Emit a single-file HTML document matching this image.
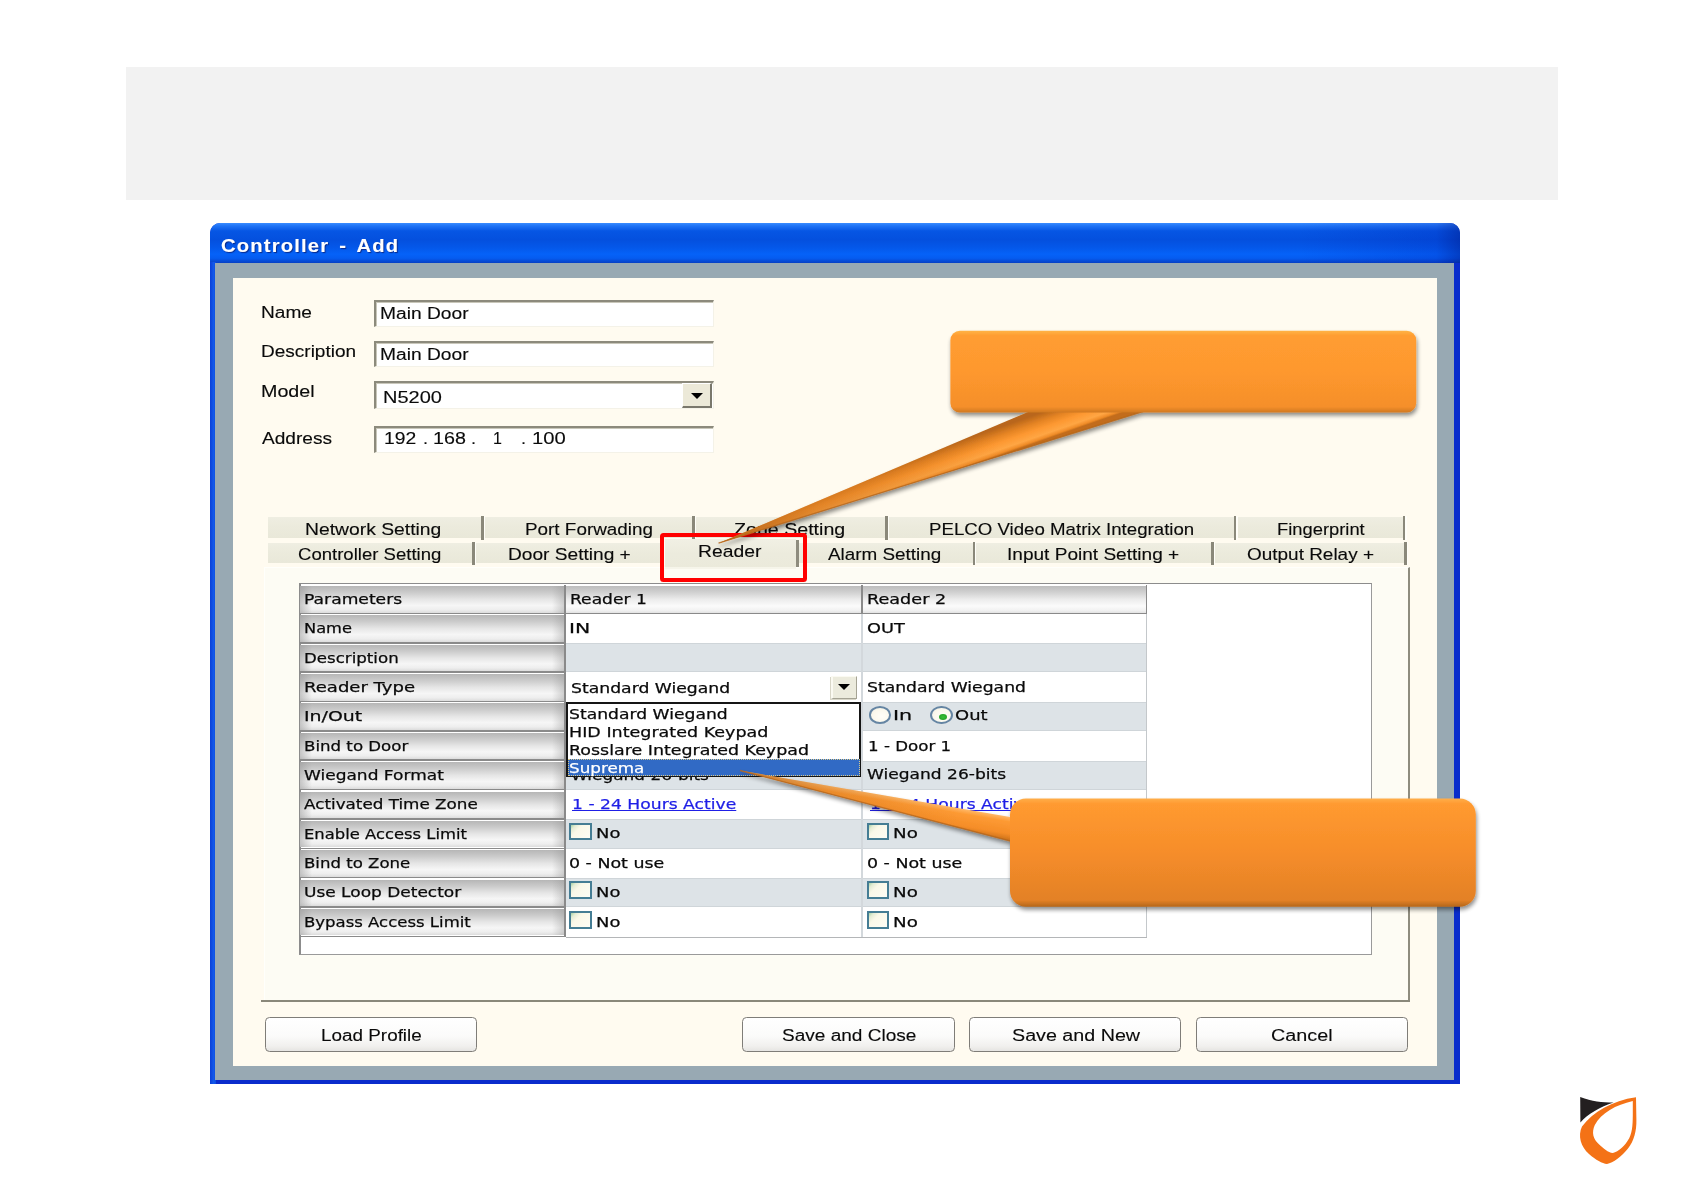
<!DOCTYPE html>
<html lang="en"><head><meta charset="utf-8"><title>Controller - Add</title>
<style>
html,body{margin:0;padding:0;background:#fff;}
body{position:relative;width:1684px;height:1191px;overflow:hidden;font-family:"Liberation Sans",sans-serif;}
#page{position:absolute;left:0;top:0;width:1684px;height:1191px;overflow:hidden;}
#page div{position:absolute;}
.t{position:absolute;white-space:pre;line-height:1;color:#0a0a0a;font-family:"Liberation Sans",sans-serif;-webkit-text-stroke:0.12px currentColor;transform-origin:0 0;display:block;}
.d{font-family:"DejaVu Sans","Liberation Sans",sans-serif;-webkit-text-stroke:0.25px currentColor;}
.arr{position:absolute;width:0;height:0;border-left:6.3px solid transparent;border-right:6.3px solid transparent;border-top:6px solid #000;}
</style></head>
<body><div id="page">
<div style="left:126.0px;top:67.0px;width:1432.0px;height:133.0px;background:#f2f2f2;"></div>
<div style="left:210.0px;top:223.0px;width:1250.0px;height:860.5px;background:#0a2ccc;border-radius:10px 10px 0 0;"></div>
<div style="left:210.0px;top:223.0px;width:1250.0px;height:40.0px;border-radius:10px 10px 0 0;background:linear-gradient(180deg,#3a8cff 0%,#1f74f6 7%,#0656e4 20%,#0450de 42%,#0458ea 62%,#0562f8 78%,#055cf0 88%,#0840c4 100%);"></div>
<div style="left:1300.0px;top:223.0px;width:160.0px;height:40.0px;border-radius:0 10px 0 0;background:linear-gradient(90deg,rgba(0,20,160,0) 0%,rgba(0,20,170,.18) 85%,rgba(0,10,120,.4) 100%);"></div>
<div style="left:210.0px;top:262.0px;width:6.0px;height:821.5px;background:linear-gradient(90deg,#0a3fd8,#1258ea 60%,#0a4ce0);"></div>
<div style="left:215.0px;top:263.0px;width:1239.0px;height:816.5px;background:#98a9b3;"></div>
<div style="left:232.5px;top:277.5px;width:1204.5px;height:788.5px;background:#fffbf0;"></div>
<div style="left:374.3px;top:300.0px;width:339.3px;height:27.0px;background:#fff;box-sizing:border-box;border-top:2.5px solid #8c8a7c;border-left:2.5px solid #8c8a7c;border-right:1.5px solid #f4f2e8;border-bottom:1.5px solid #f4f2e8;box-shadow:inset 1px 1px 0 #c9c7ba;"></div>
<div style="left:374.3px;top:340.5px;width:339.3px;height:26.7px;background:#fff;box-sizing:border-box;border-top:2.5px solid #8c8a7c;border-left:2.5px solid #8c8a7c;border-right:1.5px solid #f4f2e8;border-bottom:1.5px solid #f4f2e8;box-shadow:inset 1px 1px 0 #c9c7ba;"></div>
<div style="left:374.3px;top:381.0px;width:339.3px;height:28.4px;background:#fff;box-sizing:border-box;border-top:2.5px solid #8c8a7c;border-left:2.5px solid #8c8a7c;border-right:1.5px solid #f4f2e8;border-bottom:1.5px solid #f4f2e8;box-shadow:inset 1px 1px 0 #c9c7ba;"></div>
<div style="left:374.3px;top:426.0px;width:339.3px;height:26.6px;background:#fff;box-sizing:border-box;border-top:2.5px solid #8c8a7c;border-left:2.5px solid #8c8a7c;border-right:1.5px solid #f4f2e8;border-bottom:1.5px solid #f4f2e8;box-shadow:inset 1px 1px 0 #c9c7ba;"></div>
<div style="left:682.4px;top:382.8px;width:29.4px;height:25.4px;box-sizing:border-box;background:#ece9d8;border-top:1.5px solid #fff;border-left:1.5px solid #fff;border-right:2px solid #7a786c;border-bottom:2px solid #7a786c;"><i class="arr" style="left:7.2px;top:9.4px"></i></div>
<div style="left:267.5px;top:516.5px;width:213.9px;height:21.1px;background:linear-gradient(180deg,#efeee2,#ecebdd 40%,#e9e8d9);"></div><div style="left:481.4px;top:516.0px;width:2.4px;height:23.6px;background:#8a887a;"></div><div style="left:483.8px;top:516.0px;width:1.2px;height:23.6px;background:#fffef8;"></div>
<div style="left:485.0px;top:516.5px;width:207.2px;height:21.1px;background:linear-gradient(180deg,#efeee2,#ecebdd 40%,#e9e8d9);"></div><div style="left:692.2px;top:516.0px;width:2.4px;height:23.6px;background:#8a887a;"></div><div style="left:694.6px;top:516.0px;width:1.2px;height:23.6px;background:#fffef8;"></div>
<div style="left:695.8px;top:516.5px;width:189.4px;height:21.1px;background:linear-gradient(180deg,#efeee2,#ecebdd 40%,#e9e8d9);"></div><div style="left:885.2px;top:516.0px;width:2.4px;height:23.6px;background:#8a887a;"></div><div style="left:887.6px;top:516.0px;width:1.2px;height:23.6px;background:#fffef8;"></div>
<div style="left:888.8px;top:516.5px;width:345.2px;height:21.1px;background:linear-gradient(180deg,#efeee2,#ecebdd 40%,#e9e8d9);"></div><div style="left:1234.0px;top:516.0px;width:2.4px;height:23.6px;background:#8a887a;"></div><div style="left:1236.4px;top:516.0px;width:1.2px;height:23.6px;background:#fffef8;"></div>
<div style="left:1237.6px;top:516.5px;width:165.4px;height:21.1px;background:linear-gradient(180deg,#efeee2,#ecebdd 40%,#e9e8d9);"></div><div style="left:1403.0px;top:516.0px;width:2.4px;height:23.6px;background:#8a887a;"></div><div style="left:1405.4px;top:516.0px;width:1.2px;height:23.6px;background:#fffef8;"></div>
<div style="left:267.5px;top:542.6px;width:204.7px;height:20.6px;background:linear-gradient(180deg,#efeee2,#ecebdd 40%,#e9e8d9);"></div><div style="left:472.2px;top:542.1px;width:2.4px;height:23.1px;background:#8a887a;"></div><div style="left:474.6px;top:542.1px;width:1.2px;height:23.1px;background:#fffef8;"></div>
<div style="left:475.8px;top:542.6px;width:186.2px;height:20.6px;background:linear-gradient(180deg,#efeee2,#ecebdd 40%,#e9e8d9);"></div><div style="left:662.0px;top:542.1px;width:2.4px;height:23.1px;background:#8a887a;"></div><div style="left:664.4px;top:542.1px;width:1.2px;height:23.1px;background:#fffef8;"></div>
<div style="left:799.2px;top:542.6px;width:173.4px;height:20.6px;background:linear-gradient(180deg,#efeee2,#ecebdd 40%,#e9e8d9);"></div><div style="left:972.6px;top:542.1px;width:2.4px;height:23.1px;background:#8a887a;"></div><div style="left:975.0px;top:542.1px;width:1.2px;height:23.1px;background:#fffef8;"></div>
<div style="left:976.2px;top:542.6px;width:235.2px;height:20.6px;background:linear-gradient(180deg,#efeee2,#ecebdd 40%,#e9e8d9);"></div><div style="left:1211.4px;top:542.1px;width:2.4px;height:23.1px;background:#8a887a;"></div><div style="left:1213.8px;top:542.1px;width:1.2px;height:23.1px;background:#fffef8;"></div>
<div style="left:1215.0px;top:542.6px;width:189.2px;height:20.6px;background:linear-gradient(180deg,#efeee2,#ecebdd 40%,#e9e8d9);"></div><div style="left:1404.2px;top:542.1px;width:2.4px;height:23.1px;background:#8a887a;"></div><div style="left:1406.6px;top:542.1px;width:1.2px;height:23.1px;background:#fffef8;"></div>
<div style="left:263.5px;top:566.5px;width:1146.1px;height:435.9px;box-sizing:border-box;background:#fdfcf4;border-left:1.5px solid #fffffb;border-top:1.5px solid #fffffb;border-right:2.4px solid #8e8c7e;border-bottom:2.4px solid #8e8c7e;"></div>
<div style="left:261.2px;top:1000.0px;width:1148.4px;height:2.4px;background:#8a887a;"></div>
<div style="left:664.5px;top:538.5px;width:131.9px;height:30.0px;background:linear-gradient(180deg,#f1f0e4,#ecebdd 50%,#ebeadb);"></div>
<div style="left:796.4px;top:540.0px;width:2.8px;height:27.0px;background:#8e8c7e;"></div>
<div style="left:664.5px;top:566.8px;width:131.9px;height:2.4px;background:#f6f5ea;"></div>
<div style="left:298.5px;top:583.4px;width:1073.5px;height:371.2px;box-sizing:border-box;background:#fff;border-left:2px solid #8c8c8c;border-top:1.6px solid #8c8c8c;border-right:1.6px solid #9a9a9a;border-bottom:1.6px solid #9a9a9a;"></div>
<div style="left:566.2px;top:643.2px;width:579.4px;height:29.3px;background:#dde3e7;"></div>
<div style="left:566.2px;top:643.2px;width:579.4px;height:1.2px;background:#cfd5d9;"></div>
<div style="left:566.2px;top:671.3px;width:579.4px;height:1.2px;background:#cfd5d9;"></div>
<div style="left:566.2px;top:701.9px;width:579.4px;height:29.4px;background:#dde3e7;"></div>
<div style="left:566.2px;top:701.9px;width:579.4px;height:1.2px;background:#cfd5d9;"></div>
<div style="left:566.2px;top:730.0px;width:579.4px;height:1.2px;background:#cfd5d9;"></div>
<div style="left:566.2px;top:760.6px;width:579.4px;height:29.4px;background:#dde3e7;"></div>
<div style="left:566.2px;top:760.6px;width:579.4px;height:1.2px;background:#cfd5d9;"></div>
<div style="left:566.2px;top:788.8px;width:579.4px;height:1.2px;background:#cfd5d9;"></div>
<div style="left:566.2px;top:819.3px;width:579.4px;height:29.4px;background:#dde3e7;"></div>
<div style="left:566.2px;top:819.3px;width:579.4px;height:1.2px;background:#cfd5d9;"></div>
<div style="left:566.2px;top:847.5px;width:579.4px;height:1.2px;background:#cfd5d9;"></div>
<div style="left:566.2px;top:878.0px;width:579.4px;height:29.4px;background:#dde3e7;"></div>
<div style="left:566.2px;top:878.0px;width:579.4px;height:1.2px;background:#cfd5d9;"></div>
<div style="left:566.2px;top:906.1px;width:579.4px;height:1.2px;background:#cfd5d9;"></div>
<div style="left:861.4px;top:613.9px;width:1.8px;height:322.9px;background:#d3d8dc;"></div>
<div style="left:1145.6px;top:584.5px;width:1.6px;height:352.2px;background:#c4c8cb;"></div>
<div style="left:300.4px;top:586.0px;width:264.0px;height:26.6px;background:linear-gradient(90deg,rgba(150,150,150,.5) 0,rgba(190,190,190,0) 12px,rgba(190,190,190,0) calc(100% - 12px),rgba(150,150,150,.4) 100%),linear-gradient(180deg,#b6b6b6 0%,#cbcbcb 24%,#e6e6e6 50%,#f6f6f6 72%,#eeeeee 88%,#dcdcdc 100%);"></div>
<div style="left:300.4px;top:612.6px;width:265.8px;height:1.6px;background:#8a8a8a;"></div>
<div style="left:300.4px;top:615.4px;width:264.0px;height:26.6px;background:linear-gradient(90deg,rgba(150,150,150,.5) 0,rgba(190,190,190,0) 12px,rgba(190,190,190,0) calc(100% - 12px),rgba(150,150,150,.4) 100%),linear-gradient(180deg,#b6b6b6 0%,#cbcbcb 24%,#e6e6e6 50%,#f6f6f6 72%,#eeeeee 88%,#dcdcdc 100%);"></div>
<div style="left:300.4px;top:642.0px;width:265.8px;height:1.6px;background:#8a8a8a;"></div>
<div style="left:300.4px;top:644.7px;width:264.0px;height:26.6px;background:linear-gradient(90deg,rgba(150,150,150,.5) 0,rgba(190,190,190,0) 12px,rgba(190,190,190,0) calc(100% - 12px),rgba(150,150,150,.4) 100%),linear-gradient(180deg,#b6b6b6 0%,#cbcbcb 24%,#e6e6e6 50%,#f6f6f6 72%,#eeeeee 88%,#dcdcdc 100%);"></div>
<div style="left:300.4px;top:671.3px;width:265.8px;height:1.6px;background:#8a8a8a;"></div>
<div style="left:300.4px;top:674.0px;width:264.0px;height:26.6px;background:linear-gradient(90deg,rgba(150,150,150,.5) 0,rgba(190,190,190,0) 12px,rgba(190,190,190,0) calc(100% - 12px),rgba(150,150,150,.4) 100%),linear-gradient(180deg,#b6b6b6 0%,#cbcbcb 24%,#e6e6e6 50%,#f6f6f6 72%,#eeeeee 88%,#dcdcdc 100%);"></div>
<div style="left:300.4px;top:700.7px;width:265.8px;height:1.6px;background:#8a8a8a;"></div>
<div style="left:300.4px;top:703.4px;width:264.0px;height:26.6px;background:linear-gradient(90deg,rgba(150,150,150,.5) 0,rgba(190,190,190,0) 12px,rgba(190,190,190,0) calc(100% - 12px),rgba(150,150,150,.4) 100%),linear-gradient(180deg,#b6b6b6 0%,#cbcbcb 24%,#e6e6e6 50%,#f6f6f6 72%,#eeeeee 88%,#dcdcdc 100%);"></div>
<div style="left:300.4px;top:730.0px;width:265.8px;height:1.6px;background:#8a8a8a;"></div>
<div style="left:300.4px;top:732.8px;width:264.0px;height:26.6px;background:linear-gradient(90deg,rgba(150,150,150,.5) 0,rgba(190,190,190,0) 12px,rgba(190,190,190,0) calc(100% - 12px),rgba(150,150,150,.4) 100%),linear-gradient(180deg,#b6b6b6 0%,#cbcbcb 24%,#e6e6e6 50%,#f6f6f6 72%,#eeeeee 88%,#dcdcdc 100%);"></div>
<div style="left:300.4px;top:759.4px;width:265.8px;height:1.6px;background:#8a8a8a;"></div>
<div style="left:300.4px;top:762.1px;width:264.0px;height:26.6px;background:linear-gradient(90deg,rgba(150,150,150,.5) 0,rgba(190,190,190,0) 12px,rgba(190,190,190,0) calc(100% - 12px),rgba(150,150,150,.4) 100%),linear-gradient(180deg,#b6b6b6 0%,#cbcbcb 24%,#e6e6e6 50%,#f6f6f6 72%,#eeeeee 88%,#dcdcdc 100%);"></div>
<div style="left:300.4px;top:788.8px;width:265.8px;height:1.6px;background:#8a8a8a;"></div>
<div style="left:300.4px;top:791.5px;width:264.0px;height:26.6px;background:linear-gradient(90deg,rgba(150,150,150,.5) 0,rgba(190,190,190,0) 12px,rgba(190,190,190,0) calc(100% - 12px),rgba(150,150,150,.4) 100%),linear-gradient(180deg,#b6b6b6 0%,#cbcbcb 24%,#e6e6e6 50%,#f6f6f6 72%,#eeeeee 88%,#dcdcdc 100%);"></div>
<div style="left:300.4px;top:818.1px;width:265.8px;height:1.6px;background:#8a8a8a;"></div>
<div style="left:300.4px;top:820.8px;width:264.0px;height:26.7px;background:linear-gradient(90deg,rgba(150,150,150,.5) 0,rgba(190,190,190,0) 12px,rgba(190,190,190,0) calc(100% - 12px),rgba(150,150,150,.4) 100%),linear-gradient(180deg,#b6b6b6 0%,#cbcbcb 24%,#e6e6e6 50%,#f6f6f6 72%,#eeeeee 88%,#dcdcdc 100%);"></div>
<div style="left:300.4px;top:847.5px;width:265.8px;height:1.6px;background:#8a8a8a;"></div>
<div style="left:300.4px;top:850.2px;width:264.0px;height:26.6px;background:linear-gradient(90deg,rgba(150,150,150,.5) 0,rgba(190,190,190,0) 12px,rgba(190,190,190,0) calc(100% - 12px),rgba(150,150,150,.4) 100%),linear-gradient(180deg,#b6b6b6 0%,#cbcbcb 24%,#e6e6e6 50%,#f6f6f6 72%,#eeeeee 88%,#dcdcdc 100%);"></div>
<div style="left:300.4px;top:876.8px;width:265.8px;height:1.6px;background:#8a8a8a;"></div>
<div style="left:300.4px;top:879.5px;width:264.0px;height:26.6px;background:linear-gradient(90deg,rgba(150,150,150,.5) 0,rgba(190,190,190,0) 12px,rgba(190,190,190,0) calc(100% - 12px),rgba(150,150,150,.4) 100%),linear-gradient(180deg,#b6b6b6 0%,#cbcbcb 24%,#e6e6e6 50%,#f6f6f6 72%,#eeeeee 88%,#dcdcdc 100%);"></div>
<div style="left:300.4px;top:906.1px;width:265.8px;height:1.6px;background:#8a8a8a;"></div>
<div style="left:300.4px;top:908.9px;width:264.0px;height:26.6px;background:linear-gradient(90deg,rgba(150,150,150,.5) 0,rgba(190,190,190,0) 12px,rgba(190,190,190,0) calc(100% - 12px),rgba(150,150,150,.4) 100%),linear-gradient(180deg,#b6b6b6 0%,#cbcbcb 24%,#e6e6e6 50%,#f6f6f6 72%,#eeeeee 88%,#dcdcdc 100%);"></div>
<div style="left:300.4px;top:935.5px;width:265.8px;height:1.6px;background:#8a8a8a;"></div>
<div style="left:564.4px;top:584.5px;width:1.8px;height:352.2px;background:#8a8a8a;"></div>
<div style="left:566.2px;top:585.9px;width:295.2px;height:26.8px;background:linear-gradient(180deg,#bdbdbd 0%,#cfcfcf 22%,#ececec 50%,#fbfbfb 74%,#f2f2f2 90%,#e2e2e2 100%);"></div>
<div style="left:863.2px;top:585.9px;width:282.4px;height:26.8px;background:linear-gradient(180deg,#bdbdbd 0%,#cfcfcf 22%,#ececec 50%,#fbfbfb 74%,#f2f2f2 90%,#e2e2e2 100%);"></div>
<div style="left:566.2px;top:612.6px;width:581.0px;height:1.6px;background:#8a8a8a;"></div>
<div style="left:861.4px;top:584.5px;width:1.6px;height:29.4px;background:#8a8a8a;"></div>
<div style="left:1145.6px;top:584.5px;width:1.6px;height:29.4px;background:#8a8a8a;"></div>
<div style="left:566.2px;top:936.5px;width:581.0px;height:1.6px;background:#b4b6b8;"></div>
<div style="left:831.0px;top:675.6px;width:26.4px;height:23.8px;box-sizing:border-box;background:#ecebdd;border-top:1.5px solid #fbfaf2;border-left:2px solid #fbfaf2;border-right:1.6px solid #a5a394;border-bottom:1.6px solid #a5a394;box-shadow:-1px 1px 0 #d8d6c8;"><i class="arr" style="left:4.6px;top:7.6px"></i></div>
<div style="left:569.3px;top:822.8px;width:22.6px;height:17.6px;box-sizing:border-box;border:2.1px solid #457d94;background:linear-gradient(135deg,#a6d2a4 0%,#e4ecd4 16%,#faf8e8 36%,#fdfcf4 100%);"></div>
<div style="left:866.6px;top:822.8px;width:22.6px;height:17.6px;box-sizing:border-box;border:2.1px solid #457d94;background:linear-gradient(135deg,#a6d2a4 0%,#e4ecd4 16%,#faf8e8 36%,#fdfcf4 100%);"></div>
<div style="left:569.3px;top:881.4px;width:22.6px;height:17.6px;box-sizing:border-box;border:2.1px solid #457d94;background:linear-gradient(135deg,#a6d2a4 0%,#e4ecd4 16%,#faf8e8 36%,#fdfcf4 100%);"></div>
<div style="left:866.6px;top:881.4px;width:22.6px;height:17.6px;box-sizing:border-box;border:2.1px solid #457d94;background:linear-gradient(135deg,#a6d2a4 0%,#e4ecd4 16%,#faf8e8 36%,#fdfcf4 100%);"></div>
<div style="left:569.3px;top:911.0px;width:22.6px;height:17.6px;box-sizing:border-box;border:2.1px solid #457d94;background:linear-gradient(135deg,#a6d2a4 0%,#e4ecd4 16%,#faf8e8 36%,#fdfcf4 100%);"></div>
<div style="left:866.6px;top:911.0px;width:22.6px;height:17.6px;box-sizing:border-box;border:2.1px solid #457d94;background:linear-gradient(135deg,#a6d2a4 0%,#e4ecd4 16%,#faf8e8 36%,#fdfcf4 100%);"></div>
<div style="left:868.5px;top:706.4px;width:22.4px;height:18.0px;box-sizing:border-box;border-radius:50%;border:2px solid #6585a3;background:radial-gradient(ellipse at 60% 60%,#fffef8 0%,#fbf8ec 60%,#ecebe0 100%);"></div>
<div style="left:930.4px;top:706.4px;width:22.4px;height:18.0px;box-sizing:border-box;border-radius:50%;border:2px solid #6585a3;background:radial-gradient(ellipse at 60% 60%,#fffef8 0%,#fbf8ec 60%,#ecebe0 100%);"><i style="position:absolute;left:6.3px;top:5.2px;width:8.4px;height:6.4px;border-radius:50%;background:radial-gradient(#38c038,#1f9a1f);"></i></div>
<div style="left:264.6px;top:1016.8px;width:212.2px;height:34.8px;box-sizing:border-box;border:1.6px solid #7f7d78;border-radius:4.5px;background:linear-gradient(180deg,#ffffff 0%,#fbfbfa 55%,#f1f0ee 85%,#e6e5e2 100%);"></div>
<div style="left:742.4px;top:1016.8px;width:212.8px;height:34.8px;box-sizing:border-box;border:1.6px solid #7f7d78;border-radius:4.5px;background:linear-gradient(180deg,#ffffff 0%,#fbfbfa 55%,#f1f0ee 85%,#e6e5e2 100%);"></div>
<div style="left:969.0px;top:1016.8px;width:212.2px;height:34.8px;box-sizing:border-box;border:1.6px solid #7f7d78;border-radius:4.5px;background:linear-gradient(180deg,#ffffff 0%,#fbfbfa 55%,#f1f0ee 85%,#e6e5e2 100%);"></div>
<div style="left:1195.8px;top:1016.8px;width:212.6px;height:34.8px;box-sizing:border-box;border:1.6px solid #7f7d78;border-radius:4.5px;background:linear-gradient(180deg,#ffffff 0%,#fbfbfa 55%,#f1f0ee 85%,#e6e5e2 100%);"></div>
<span class="t" style="left:220.5px;top:236.2px;font-size:19.20px;transform:scaleX(1.0551);font-weight:bold;color:#fff;text-shadow:1px 1px 1px #0a2a8a;letter-spacing:1.1px;word-spacing:3px;">Controller - Add</span>
<span class="t" style="left:261.1px;top:305.1px;font-size:15.78px;transform:scaleX(1.2124);">Name</span>
<span class="t" style="left:261.1px;top:344.2px;font-size:15.78px;transform:scaleX(1.2057);">Description</span>
<span class="t" style="left:260.9px;top:384.4px;font-size:15.78px;transform:scaleX(1.2494);">Model</span>
<span class="t" style="left:261.6px;top:430.6px;font-size:15.78px;transform:scaleX(1.2118);">Address</span>
<span class="t" style="left:379.5px;top:306.4px;font-size:15.78px;transform:scaleX(1.2182);">Main Door</span>
<span class="t" style="left:379.5px;top:346.8px;font-size:15.78px;transform:scaleX(1.2182);">Main Door</span>
<span class="t" style="left:382.6px;top:389.8px;font-size:15.78px;transform:scaleX(1.2675);">N5200</span>
<span class="t" style="left:383.5px;top:430.6px;font-size:15.78px;transform:scaleX(1.2244);">192</span>
<span class="t" style="left:422.5px;top:430.6px;font-size:15.78px;transform:scaleX(1.1500);">.</span>
<span class="t" style="left:432.8px;top:430.6px;font-size:15.78px;transform:scaleX(1.2490);">168</span>
<span class="t" style="left:471.0px;top:430.6px;font-size:15.78px;transform:scaleX(1.1500);">.</span>
<span class="t" style="left:492.5px;top:430.6px;font-size:15.78px;transform:scaleX(1.0162);">1</span>
<span class="t" style="left:520.5px;top:430.6px;font-size:15.78px;transform:scaleX(1.1500);">.</span>
<span class="t" style="left:531.8px;top:430.6px;font-size:15.78px;transform:scaleX(1.2818);">100</span>
<span class="t" style="left:305.1px;top:521.0px;font-size:16.19px;transform:scaleX(1.1930);">Network Setting</span>
<span class="t" style="left:524.5px;top:521.0px;font-size:16.19px;transform:scaleX(1.1658);">Port Forwading</span>
<span class="t" style="left:734.0px;top:521.0px;font-size:16.19px;transform:scaleX(1.2120);">Zone Setting</span>
<span class="t" style="left:928.8px;top:521.0px;font-size:16.19px;transform:scaleX(1.1530);">PELCO Video Matrix Integration</span>
<span class="t" style="left:1277.3px;top:521.0px;font-size:16.19px;transform:scaleX(1.1335);">Fingerprint</span>
<span class="t" style="left:298.1px;top:546.3px;font-size:16.19px;transform:scaleX(1.1459);">Controller Setting</span>
<span class="t" style="left:508.4px;top:546.3px;font-size:16.19px;transform:scaleX(1.1814);">Door Setting +</span>
<span class="t" style="left:698.0px;top:543.1px;font-size:16.19px;transform:scaleX(1.1945);">Reader</span>
<span class="t" style="left:828.0px;top:546.3px;font-size:16.19px;transform:scaleX(1.1656);">Alarm Setting</span>
<span class="t" style="left:1007.4px;top:546.3px;font-size:16.19px;transform:scaleX(1.1773);">Input Point Setting +</span>
<span class="t" style="left:1246.9px;top:546.3px;font-size:16.19px;transform:scaleX(1.1709);">Output Relay +</span>
<span class="t d" style="left:304.2px;top:591.9px;font-size:14.81px;transform:scaleX(1.1589);">Parameters</span>
<span class="t d" style="left:304.2px;top:621.2px;font-size:14.81px;transform:scaleX(1.0984);">Name</span>
<span class="t d" style="left:304.2px;top:650.6px;font-size:14.81px;transform:scaleX(1.1236);">Description</span>
<span class="t d" style="left:304.1px;top:679.9px;font-size:14.81px;transform:scaleX(1.2197);">Reader Type</span>
<span class="t d" style="left:304.1px;top:709.3px;font-size:14.81px;transform:scaleX(1.2790);">In/Out</span>
<span class="t d" style="left:304.2px;top:738.6px;font-size:14.81px;transform:scaleX(1.1228);">Bind to Door</span>
<span class="t d" style="left:304.2px;top:768.0px;font-size:14.81px;transform:scaleX(1.1499);">Wiegand Format</span>
<span class="t d" style="left:304.2px;top:797.3px;font-size:14.81px;transform:scaleX(1.1336);">Activated Time Zone</span>
<span class="t d" style="left:304.2px;top:826.7px;font-size:14.81px;transform:scaleX(1.1075);">Enable Access Limit</span>
<span class="t d" style="left:304.2px;top:856.0px;font-size:14.81px;transform:scaleX(1.1192);">Bind to Zone</span>
<span class="t d" style="left:304.2px;top:885.4px;font-size:14.81px;transform:scaleX(1.1476);">Use Loop Detector</span>
<span class="t d" style="left:304.2px;top:914.7px;font-size:14.81px;transform:scaleX(1.1154);">Bypass Access Limit</span>
<span class="t d" style="left:569.5px;top:591.9px;font-size:14.81px;transform:scaleX(1.1560);">Reader 1</span>
<span class="t d" style="left:569.0px;top:621.2px;font-size:14.81px;transform:scaleX(1.3763);">IN</span>
<span class="t d" style="left:571.1px;top:681.1px;font-size:14.81px;transform:scaleX(1.1637);">Standard Wiegand</span>
<span class="t d" style="left:571.1px;top:767.5px;font-size:14.81px;transform:scaleX(1.1433);">Wiegand 26-bits</span>
<span class="t d" style="left:571.9px;top:797.4px;font-size:14.81px;transform:scaleX(1.1606);color:#1f1fe6;text-decoration:underline;">1 - 24 Hours Active</span>
<span class="t d" style="left:595.7px;top:826.4px;font-size:14.81px;transform:scaleX(1.2100);">No</span>
<span class="t d" style="left:569.1px;top:856.2px;font-size:14.81px;transform:scaleX(1.1767);">0 - Not use</span>
<span class="t d" style="left:595.7px;top:884.9px;font-size:14.81px;transform:scaleX(1.2100);">No</span>
<span class="t d" style="left:595.7px;top:914.5px;font-size:14.81px;transform:scaleX(1.2100);">No</span>
<span class="t d" style="left:866.8px;top:591.9px;font-size:14.81px;transform:scaleX(1.1915);">Reader 2</span>
<span class="t d" style="left:866.5px;top:621.2px;font-size:14.81px;transform:scaleX(1.2005);">OUT</span>
<span class="t d" style="left:866.6px;top:680.3px;font-size:14.81px;transform:scaleX(1.1622);">Standard Wiegand</span>
<span class="t d" style="left:893.4px;top:707.8px;font-size:14.81px;transform:scaleX(1.3949);">In</span>
<span class="t d" style="left:955.3px;top:707.8px;font-size:14.81px;transform:scaleX(1.2136);">Out</span>
<span class="t d" style="left:868.0px;top:738.5px;font-size:14.81px;transform:scaleX(1.1263);">1 - Door 1</span>
<span class="t d" style="left:866.6px;top:767.2px;font-size:14.81px;transform:scaleX(1.1526);">Wiegand 26-bits</span>
<span class="t d" style="left:870.3px;top:797.4px;font-size:14.81px;transform:scaleX(1.1606);color:#1f1fe6;text-decoration:underline;">1 - 24 Hours Active</span>
<span class="t d" style="left:892.7px;top:826.4px;font-size:14.81px;transform:scaleX(1.2318);">No</span>
<span class="t d" style="left:866.6px;top:856.2px;font-size:14.81px;transform:scaleX(1.1767);">0 - Not use</span>
<span class="t d" style="left:892.7px;top:884.9px;font-size:14.81px;transform:scaleX(1.2318);">No</span>
<span class="t d" style="left:892.7px;top:914.5px;font-size:14.81px;transform:scaleX(1.2318);">No</span>
<span class="t" style="left:321.1px;top:1026.8px;font-size:16.46px;transform:scaleX(1.1486);">Load Profile</span>
<span class="t" style="left:781.8px;top:1026.8px;font-size:16.46px;transform:scaleX(1.1579);">Save and Close</span>
<span class="t" style="left:1011.5px;top:1026.8px;font-size:16.46px;transform:scaleX(1.1978);">Save and New</span>
<span class="t" style="left:1271.2px;top:1026.8px;font-size:16.46px;transform:scaleX(1.2033);">Cancel</span>
<div style="left:566.0px;top:702.2px;width:295.4px;height:75.2px;box-sizing:border-box;background:#fff;border:2px solid #151515;"></div>
<div style="left:567.8px;top:758.6px;width:291.8px;height:17.2px;box-sizing:border-box;background:#316ac5;border:1px dotted #d8c98a;"></div>
<span class="t d" style="left:569.4px;top:706.9px;font-size:14.81px;transform:scaleX(1.1607);">Standard Wiegand</span>
<span class="t d" style="left:569.3px;top:725.1px;font-size:14.81px;transform:scaleX(1.1836);">HID Integrated Keypad</span>
<span class="t d" style="left:569.4px;top:742.9px;font-size:14.81px;transform:scaleX(1.1782);">Rosslare Integrated Keypad</span>
<span class="t d" style="left:569.4px;top:760.8px;font-size:14.81px;transform:scaleX(1.1323);color:#fff;">Suprema</span>
<div style="left:660.2px;top:533.2px;width:146.8px;height:49.0px;box-sizing:border-box;border:4.8px solid #ff0000;border-radius:3.5px;"></div>

<svg width="1684" height="1191" viewBox="0 0 1684 1191" style="position:absolute;left:0;top:0">
<defs>
<linearGradient id="og1" x1="0" y1="0" x2="0" y2="1">
<stop offset="0" stop-color="#ffb446"/><stop offset="0.06" stop-color="#ff9d31"/><stop offset="0.5" stop-color="#fe982e"/><stop offset="0.93" stop-color="#f58f2a"/><stop offset="1" stop-color="#cf7820"/>
</linearGradient>
<linearGradient id="og2" x1="0" y1="0" x2="0" y2="1">
<stop offset="0" stop-color="#ffae4a"/><stop offset="0.05" stop-color="#ff9a30"/><stop offset="0.5" stop-color="#f68d2a"/><stop offset="0.94" stop-color="#e38126"/><stop offset="1" stop-color="#b4661a"/>
</linearGradient>
<linearGradient id="pt1" gradientUnits="userSpaceOnUse" x1="1090.6" y1="395.4" x2="1099.4" y2="420.6">
<stop offset="0" stop-color="#b9661a"/><stop offset="0.3" stop-color="#e58424"/><stop offset="0.55" stop-color="#fd9831"/><stop offset="0.8" stop-color="#ffa644"/><stop offset="0.93" stop-color="#f08c28"/><stop offset="1" stop-color="#c26c1a"/>
</linearGradient>
<linearGradient id="pt2" gradientUnits="userSpaceOnUse" x1="1017" y1="818.2" x2="1013" y2="841.8">
<stop offset="0" stop-color="#ffb868"/><stop offset="0.2" stop-color="#fd9a33"/><stop offset="0.7" stop-color="#f58d28"/><stop offset="1" stop-color="#c96f18"/>
</linearGradient>
<linearGradient id="ptd1" gradientUnits="userSpaceOnUse" x1="718.5" y1="543.2" x2="1000" y2="445">
<stop offset="0" stop-color="#9a5210" stop-opacity="0.75"/><stop offset="0.35" stop-color="#b05e14" stop-opacity="0.35"/><stop offset="1" stop-color="#c06a18" stop-opacity="0"/>
</linearGradient>
<linearGradient id="ptd2" gradientUnits="userSpaceOnUse" x1="740" y1="770.5" x2="960" y2="810">
<stop offset="0" stop-color="#9a5210" stop-opacity="0.6"/><stop offset="0.4" stop-color="#b05e14" stop-opacity="0.25"/><stop offset="1" stop-color="#c06a18" stop-opacity="0"/>
</linearGradient>
<filter id="sh" x="-5%" y="-10%" width="110%" height="130%">
<feGaussianBlur in="SourceAlpha" stdDeviation="2.2"/><feOffset dx="0.5" dy="2.5"/>
<feComponentTransfer><feFuncA type="linear" slope="0.45"/></feComponentTransfer>
<feMerge><feMergeNode/><feMergeNode in="SourceGraphic"/></feMerge>
</filter>
</defs>
<g filter="url(#sh)">
<path d="M718.5 543.2 L1047 404 L1143 411.6 Z" fill="url(#pt1)"/><path d="M718.5 543.2 L1047 404 L1143 411.6 Z" fill="url(#ptd1)"/>
<path d="M718.5 543.2 L1143 411.6" stroke="#b5651a" stroke-width="1.3" fill="none" stroke-opacity="0.8"/>
<rect x="950.4" y="330.7" width="465.8" height="81.8" rx="9.5" ry="9.5" fill="url(#og1)"/>
</g>
<g filter="url(#sh)">
<path d="M740 770.5 L1016 818 L1014 842 Z" fill="url(#pt2)"/><path d="M740 770.5 L1016 818 L1014 842 Z" fill="url(#ptd2)"/>
<path d="M740 770.5 L1014 842" stroke="#b5651a" stroke-width="1.3" fill="none" stroke-opacity="0.8"/>
<rect x="1010" y="798.5" width="465.8" height="108.3" rx="16" ry="16" fill="url(#og2)"/>
</g>
<!-- logo -->
<path d="M1580.2 1097 C1592 1101.5 1602 1102.6 1613.5 1102.6 C1600 1107 1588 1114 1580.4 1122.5 Z" fill="#231f20"/>
<path fill-rule="evenodd" fill="#f47216" d="M1636 1097.2 C1612 1100.5 1593 1112 1582 1126.5 C1577.5 1136 1581 1147 1589 1154 C1596 1160 1602 1163.4 1607 1164 C1613 1163 1622 1156 1628 1148.5 C1634 1141 1636.6 1131 1636.4 1120 Z M1632.8 1100.9 C1616 1104.8 1601 1112.8 1594.8 1125 C1591.4 1132.5 1593.2 1139 1598.7 1144 C1603.7 1148.5 1608 1152.6 1612.8 1153 C1618.6 1151.6 1624.8 1146.2 1629.2 1138.3 C1632.8 1131 1632.8 1122 1632.8 1112 Z"/>
</svg>

</div></body></html>
